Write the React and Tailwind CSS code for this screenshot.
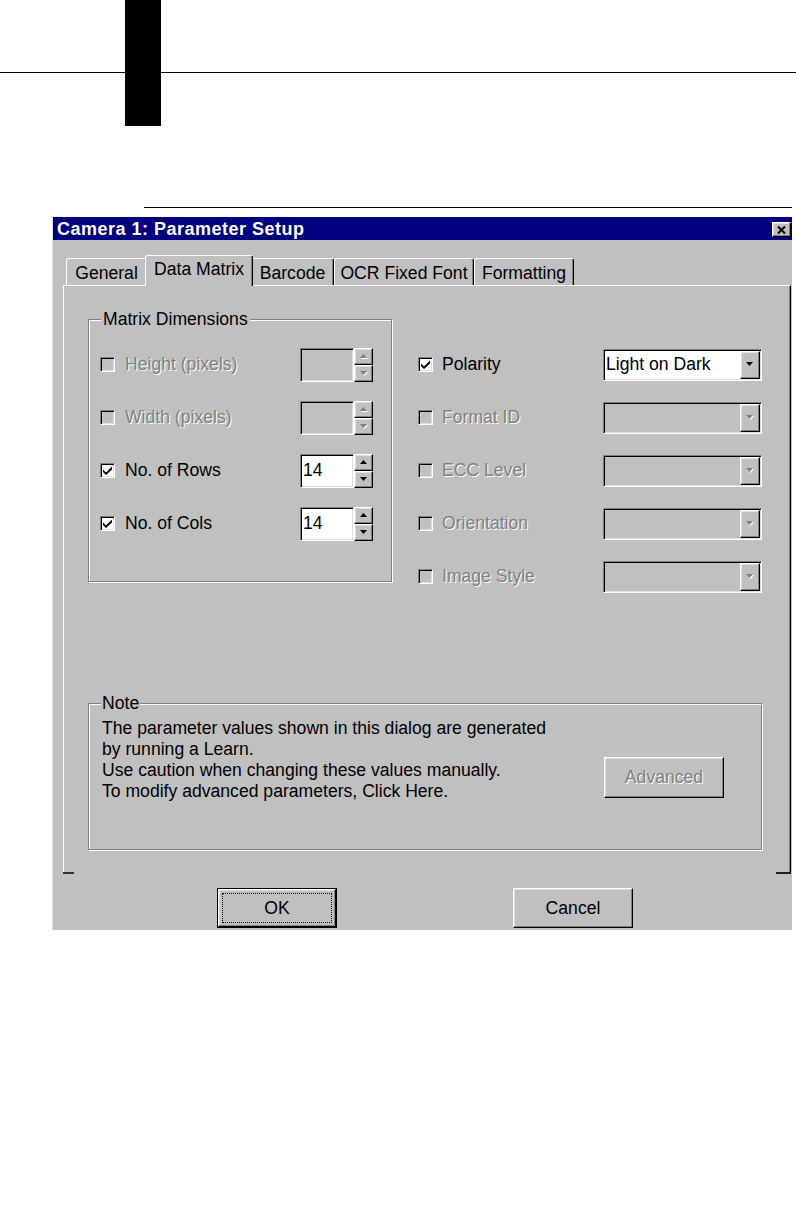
import React from 'react';

const raised =
  'border border-t-white border-l-white border-r-black border-b-black shadow-[inset_-1px_-1px_0_#808080,inset_1px_1px_0_#dfdfdf]';
const sunken =
  'border border-t-[#808080] border-l-[#808080] border-r-white border-b-white shadow-[inset_1px_1px_0_#000,inset_-1px_-1px_0_#dfdfdf]';
const etched = 'border border-[#808080] shadow-[inset_1px_1px_0_#fff,1px_1px_0_#fff]';
const dimText = 'text-[#808080] [text-shadow:1px_1px_0_#ffffff]';

function Arrow({ up, disabled }) {
  const pts = up ? '3.5,0 7,4 0,4' : '0,0 7,0 3.5,4';
  return (
    <svg width="8" height="5" viewBox="0 0 8 5">
      {disabled && <polygon points={pts} fill="#fff" transform="translate(1 1)" />}
      <polygon points={pts} fill={disabled ? '#808080' : '#000'} />
    </svg>
  );
}

function CheckBox({ checked, disabled }) {
  return (
    <span
      className={`w-[15px] h-[15px] shrink-0 flex items-center justify-center ${sunken} ${
        disabled ? 'bg-[#c0c0c0]' : 'bg-white'
      }`}
    >
      {checked && (
        <svg width="9" height="9" viewBox="0 0 9 9">
          <path d="M0 3.5 L3 6.5 L9 0.5 L9 3.5 L3 9 L0 6 Z" fill="#000" />
        </svg>
      )}
    </span>
  );
}

function SpinEdit({ value, disabled }) {
  return (
    <div className="flex">
      <div
        className={`w-[54px] h-[34px] ${sunken} ${disabled ? 'bg-[#c0c0c0]' : 'bg-white'} flex items-center pl-[2px]`}
      >
        {value}
      </div>
      <div className="flex flex-col w-[19px] h-[34px]">
        <div className={`h-[17px] ${raised} bg-[#c0c0c0] flex items-center justify-center`}>
          <Arrow up disabled={disabled} />
        </div>
        <div className={`h-[17px] ${raised} bg-[#c0c0c0] flex items-center justify-center`}>
          <Arrow disabled={disabled} />
        </div>
      </div>
    </div>
  );
}

function Combo({ value, disabled }) {
  return (
    <div
      className={`w-[159px] h-[32px] ${sunken} ${disabled ? 'bg-[#c0c0c0]' : 'bg-white'} flex items-stretch p-px`}
    >
      <span className="flex-1 flex items-center pl-px whitespace-nowrap">{value}</span>
      <div className={`w-[20px] ${raised} bg-[#c0c0c0] flex items-center justify-center`}>
        <Arrow disabled={disabled} />
      </div>
    </div>
  );
}

function LeftRow({ label, checked, disabled, value }) {
  return (
    <div className="h-[33px] flex items-center">
      <CheckBox checked={checked} disabled={disabled} />
      <span className={`ml-[10px] flex-1 whitespace-nowrap ${disabled ? dimText : ''}`}>{label}</span>
      <SpinEdit value={value} disabled={disabled} />
    </div>
  );
}

function RightRow({ label, checked, disabled, value }) {
  return (
    <div className="h-[33px] flex items-center">
      <CheckBox checked={checked} disabled={disabled} />
      <span className={`ml-[9px] flex-1 whitespace-nowrap ${disabled ? dimText : ''}`}>{label}</span>
      <Combo value={value} disabled={disabled} />
    </div>
  );
}

function Tab({ label, width, active }) {
  if (active) {
    return (
      <div
        style={{ width }}
        className="relative z-10 -mx-[2px] -mb-px h-[31px] bg-[#c0c0c0] border-t border-l border-white border-r border-r-black rounded-t-[3px] shadow-[inset_-1px_0_0_#808080] flex items-center justify-center pb-[3px] whitespace-nowrap"
      >
        {label}
      </div>
    );
  }
  return (
    <div
      style={{ width }}
      className="h-[27px] bg-[#c0c0c0] border-t border-l border-white border-r border-r-black rounded-t-[3px] shadow-[inset_-1px_0_0_#808080] flex items-center justify-center pt-[2px] whitespace-nowrap"
    >
      {label}
    </div>
  );
}

const tabs = [
  { label: 'General', width: 81 },
  { label: 'Data Matrix', width: 108, active: true },
  { label: 'Barcode', width: 83 },
  { label: 'OCR Fixed Font', width: 140 },
  { label: 'Formatting', width: 100 },
];

export default function App() {
  return (
    <div className="w-[796px] h-[1225px] bg-white overflow-hidden font-['Liberation_Sans',Arial,sans-serif] text-[17.6px] leading-[21px] text-black">
      {/* chapter marker */}
      <div className="flex items-start h-[126px]">
        <div className="w-[125px] h-[73px] border-b border-black" />
        <div className="w-[36px] h-[126px] bg-black" />
        <div className="flex-1 h-[73px] border-b border-black" />
      </div>
      <div className="ml-[144px] mt-[81px] w-[648px] h-px bg-black" />

      {/* dialog */}
      <div className="ml-[52px] mt-[9px] w-[740px] h-[713px] bg-[#c0c0c0] border-l border-[#dfdfdf] flex flex-col">
        <div className="h-[23px] bg-[#000080] flex items-center pl-[4px] pr-px">
          <span className="text-white font-bold text-[18px] tracking-[0.5px] leading-none">
            Camera 1: Parameter Setup
          </span>
          <div className={`ml-auto mt-[2px] w-[19px] h-[15px] ${raised} bg-[#c0c0c0] flex items-center justify-center`}>
            <svg width="9" height="8" viewBox="0 0 9 8">
              <path d="M1 0.5 L8 7.5 M8 0.5 L1 7.5" stroke="#000" strokeWidth="2" />
            </svg>
          </div>
        </div>

        {/* tabs */}
        <div className="mt-[15px] ml-[13px] h-[30px] flex items-end">
          {tabs.map((t) => (
            <Tab key={t.label} {...t} />
          ))}
        </div>

        {/* tab panel */}
        <div className="ml-[10px] w-[728px] h-[587px] border-t border-l border-white border-r border-r-black shadow-[inset_-1px_0_0_#808080] pt-[33px] pl-[24px]">
          <div className="flex items-start">
            <div className={`relative w-[304px] h-[263px] ${etched} pt-[28px] pl-[11px] pr-[18px] flex flex-col gap-[20px]`}>
              <span className="absolute -top-[11px] left-[12px] bg-[#c0c0c0] px-[2px]">Matrix Dimensions</span>
              <LeftRow label="Height (pixels)" disabled />
              <LeftRow label="Width (pixels)" disabled />
              <LeftRow label="No. of Rows" checked value="14" />
              <LeftRow label="No. of Cols" checked value="14" />
            </div>
            <div className="ml-[26px] mt-[29px] w-[344px] flex flex-col gap-[20px]">
              <RightRow label="Polarity" checked value="Light on Dark" />
              <RightRow label="Format ID" disabled />
              <RightRow label="ECC Level" disabled />
              <RightRow label="Orientation" disabled />
              <RightRow label="Image Style" disabled />
            </div>
          </div>

          <div className={`relative mt-[110px] w-[674px] h-[147px] ${etched} flex items-start`}>
            <span className="absolute -top-[11px] left-[12px] bg-[#c0c0c0] px-px">Note</span>
            <div className="pl-[13px] pt-[14px] whitespace-nowrap">
              <div>The parameter values shown in this dialog are generated</div>
              <div>by running a Learn.</div>
              <div>Use caution when changing these values manually.</div>
              <div>To modify advanced parameters, Click Here.</div>
            </div>
            <div
              className={`ml-auto mr-[37px] mt-[53px] w-[120px] h-[41px] ${raised} bg-[#c0c0c0] flex items-center justify-center ${dimText}`}
            >
              Advanced
            </div>
          </div>
        </div>
        <div className="ml-[10px] w-[728px] h-[2px] flex justify-between">
          <div className="w-[11px] bg-[#303030]" />
          <div className="w-[15px] bg-[#202020]" />
        </div>

        {/* buttons */}
        <div className="mt-[14px] ml-[164px] flex gap-[176px]">
          <div className="w-[120px] h-[40px] border border-black">
            <div className={`h-full ${raised} bg-[#c0c0c0] p-[3px] flex`}>
              <div className="flex-1 border border-dotted border-black flex items-center justify-center">OK</div>
            </div>
          </div>
          <div className={`w-[120px] h-[40px] ${raised} bg-[#c0c0c0] flex items-center justify-center`}>Cancel</div>
        </div>
      </div>
    </div>
  );
}
